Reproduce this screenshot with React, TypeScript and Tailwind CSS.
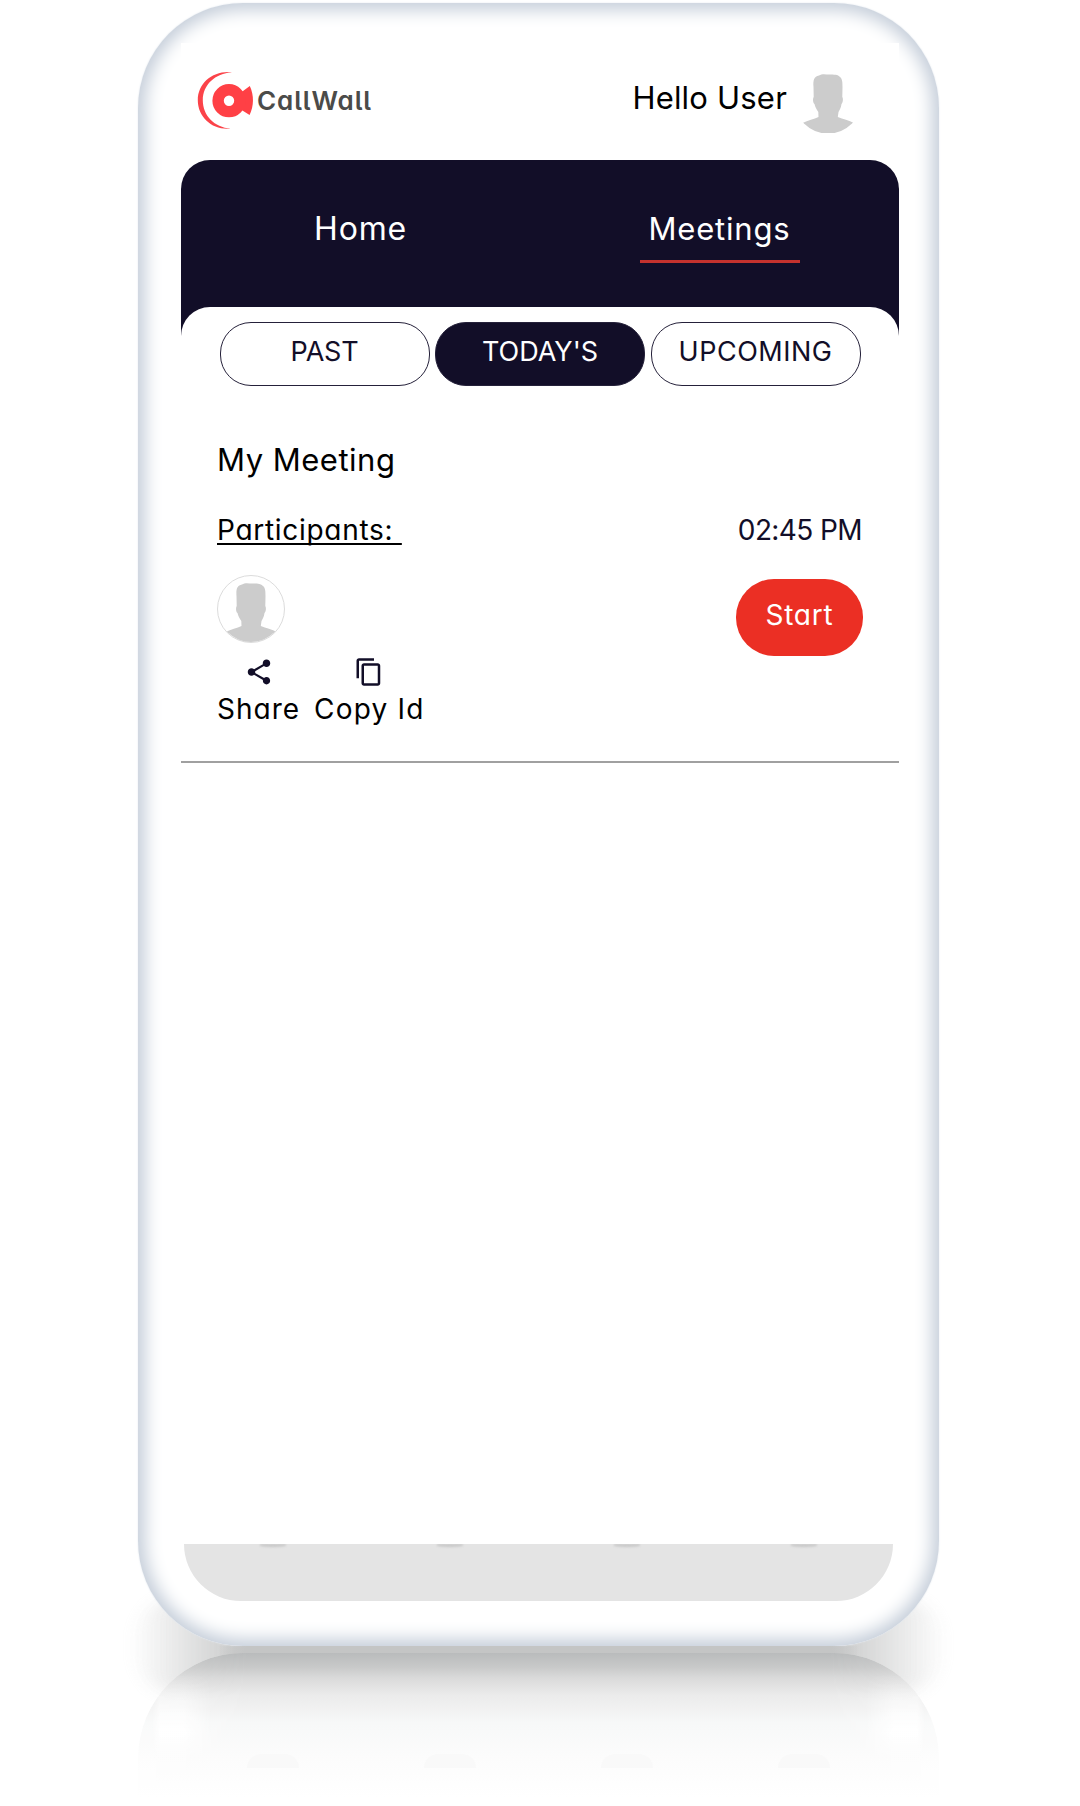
import { MdContentCopy, MdShare } from "react-icons/md";

function Logo() {
  return (
    <div className="-mt-px flex items-center">
      <svg width="62" height="60" viewBox="0 0 62 60" className="shrink-0">
        <path d="M37 2.300C18 .3 2.800 13 2.800 30.300s15 30.200 32.700 28.300C19.500 57.500 7.800 45.800 7.800 30.300S20 3.500 37 2.300Z" fill="#fb4349" />
        <path d="M44 24L47 21.800L54.800 16C59.200 25.500 59 36 54.600 45L47 40.300L44 38Z" fill="#ff4045" />
        <circle cx="34" cy="30.700" r="10.900" fill="none" stroke="#ff4045" strokeWidth="11.400" />
      </svg>
      <span className="mt-[2px] whitespace-nowrap text-[26px] font-semibold leading-[40px] tracking-[0.9px] text-[#4b4b49] [font-feature-settings:'cv11','cv05']">
        CallWall
      </span>
    </div>
  );
}

function Silhouette({ className }: { className: string }) {
  return (
    <svg viewBox="0 0 68 68" className={className} fill="#cccccc">
      <path d="M19.500 21C19 14 20 10.500 25 9.500C28 7.500 32 8.500 35 8.500C40 8.500 44 8.500 46 11C48.500 13 48.500 17 48.500 21L48.300 31C49.500 33 48.800 37 47.500 38C47 42 45.500 44 44.500 46L43.800 51C49 53.500 55 54 60 57C54 64 48 67 42 67H26C20 67 13 63 8.500 57C14 54 20 53.500 24.500 51L24.300 46C22.500 43 21 41 20.500 38C19 37 18.500 33 19.700 31Z" />
    </svg>
  );
}

function Pill({ label, active, spacing }: { label: string; active?: boolean; spacing: string }) {
  return (
    <button
      className={`h-[64px] w-[210px] rounded-[31px] border-[1.5px] border-[#25213a] pb-[5px] text-[27px] leading-[40px] ${spacing} ${
        active ? "bg-[#120e28] text-white" : "bg-white text-[#120e28]"
      }`}
    >
      {label}
    </button>
  );
}

function Reflection() {
  return (
    <div className="relative ml-[138px] h-[160px] w-[801px]">
      <div className="absolute -left-[8px] -top-[46px] -z-10 h-[92px] w-[817px] rounded-[46px] bg-[linear-gradient(to_right,transparent,#c4c5c5_110px,#c4c5c5_707px,transparent)] opacity-90 blur-[8px]" />
      <div className="absolute inset-x-[80px] top-0 h-[12px] bg-[linear-gradient(to_right,transparent,#c4c5c5_28px,#c4c5c5_613px,transparent)]" />
      <div className="absolute inset-x-0 top-[7px] h-[153px] overflow-hidden rounded-t-[105px] bg-[linear-gradient(to_bottom,#b9bbbc_0px,#c8c9c9_14px,#dadada_25px,#ebebeb_42px,#f7f8f8_70px,#fcfcfc_105px,#ffffff_145px)] [mask-image:linear-gradient(to_right,rgba(0,0,0,0.7),black_110px,black_691px,rgba(0,0,0,0.7))]">
        <div className="absolute inset-0 bg-[linear-gradient(to_bottom,transparent_20px,white_80px,transparent_110px)] [mask-image:linear-gradient(to_right,transparent_14px,black_22px,black_45px,transparent_75px,transparent_726px,black_756px,black_779px,transparent_787px)]" />
        <div className="mx-[46px] mt-[101px] flex justify-around">
          {[0, 1, 2, 3].map((i) => (
            <span key={i} className="h-[14px] w-[52px] rounded-t-full bg-[#f9f9f9]" />
          ))}
        </div>
      </div>
    </div>
  );
}

export default function App() {
  return (
    <div className="relative isolate h-[1806px] w-[1080px] overflow-hidden bg-white pt-[3px] font-['Inter','Liberation_Sans',sans-serif] text-black [font-feature-settings:'cv11']">
      <div className="ml-[138px] flex h-[1643px] w-[801px] flex-col rounded-[105px] bg-white pl-[43px] pr-[40px] pt-[40px] shadow-[inset_0_0_17px_7px_#c4cdd9,0_0_2px_#e3e8ee]">
        <main className="flex h-[1501px] flex-col bg-white">
          <header className="flex h-[117px] items-start justify-between pl-[14px] pr-[37px] pt-[28px]">
            <Logo />
            <div className="flex items-start">
              <span className="mt-[7px] whitespace-nowrap text-[31px] leading-[40px] tracking-[0.2px]">Hello User</span>
              <Silhouette className="ml-[7px] mt-[-5.500px] h-[68px] w-[68px] [clip-path:circle(50%)]" />
            </div>
          </header>

          <nav className="flex h-[176px] shrink-0 rounded-t-[29px] bg-[#120e28] text-[31px] leading-[40px] text-white">
            <div className="flex flex-1 justify-center pt-[49px]">
              <span className="text-[32px] tracking-[0.8px]">Home</span>
            </div>
            <div className="flex flex-1 justify-center pt-[49px]">
              <span className="h-[54px] w-[160px] border-b-[3px] border-[#c4322e] text-center tracking-[0.8px]">Meetings</span>
            </div>
          </nav>

          <section className="relative -mt-[29px] rounded-t-[29px] bg-white">
            <div className="flex justify-center gap-[5.500px] pt-[15px]">
              <Pill label="PAST" spacing="tracking-[-0.2px]" />
              <Pill label="TODAY'S" active spacing="tracking-[0px]" />
              <Pill label="UPCOMING" spacing="tracking-[0.5px]" />
            </div>

            <article className="flex h-[377px] justify-between border-b-[2px] border-[#a0a0a0] pl-[36px] pr-[36px] pt-[54px]">
              <div>
                <h2 className="whitespace-nowrap text-[31px] font-normal leading-[40px] tracking-[0.5px]">My Meeting</h2>
                <p className="mt-[30px] whitespace-pre text-[28px] leading-[40px] tracking-[0.7px] underline decoration-[1.500px] underline-offset-[3px] [text-decoration-skip-ink:none]">{"Participants: "}</p>
                <div className="mt-[25px] h-[68px] w-[68px] overflow-hidden rounded-full border border-[#dcdcdc]">
                  <Silhouette className="-ml-px -mt-px h-[68px] w-[68px]" />
                </div>
                <div className="mt-[14px] flex gap-[14px] text-[28px] leading-[40px] tracking-[1px]">
                  <div className="flex flex-col items-center">
                    <MdShare size={30} color="#120e28" />
                    <span className="mt-[1.500px]">Share</span>
                  </div>
                  <div className="flex flex-col items-center">
                    <MdContentCopy size={30} color="#120e28" />
                    <span className="mt-[1.500px] whitespace-nowrap tracking-[1.2px]">Copy Id</span>
                  </div>
                </div>
              </div>
              <div className="flex flex-col items-end pt-[70px]">
                <time className="mr-px whitespace-nowrap text-[28px] leading-[40px] tracking-[-0.6px] text-[#120e28]">02:45 PM</time>
                <button className="mt-[29px] h-[77px] w-[127px] rounded-[38px] bg-[#eb2f24] pb-[6px] text-[28px] leading-[40px] tracking-[0.8px] text-white">
                  Start
                </button>
              </div>
            </article>
          </section>
        </main>

        <div className="ml-[3px] mr-[6px] flex h-[57px] justify-around overflow-hidden rounded-b-[66px] bg-[#e4e4e4]">
          {[0, 1, 2, 3].map((i) => (
            <span key={i} className="h-[3px] w-[26px] rounded-b-[50%] bg-[#c7c7c7] blur-[1px]" />
          ))}
        </div>
      </div>
      <Reflection />
    </div>
  );
}
